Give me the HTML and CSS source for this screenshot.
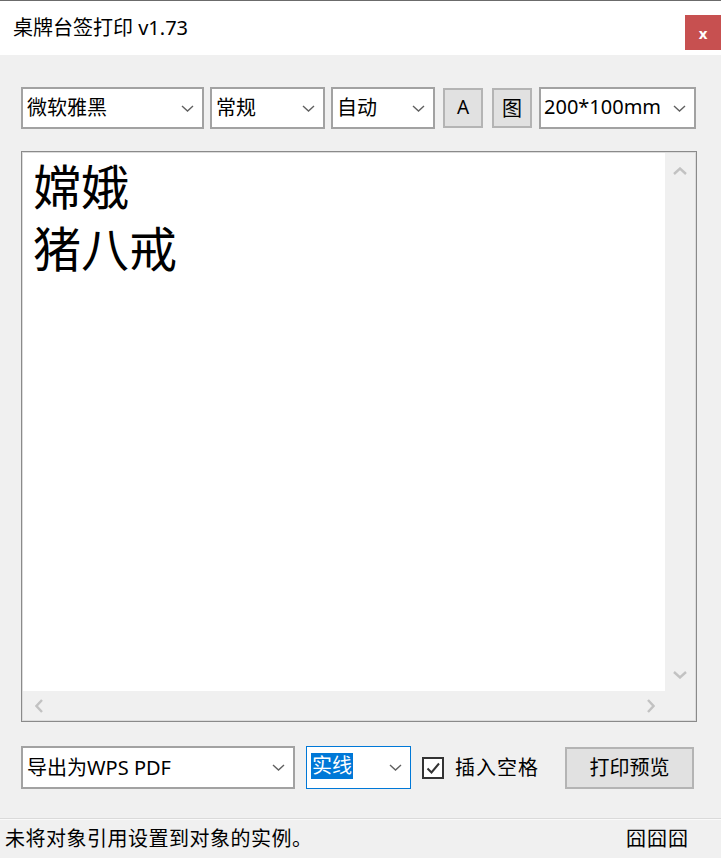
FILE: index.html
```html
<!DOCTYPE html>
<html lang="zh-CN">
<head>
  <meta charset="UTF-8">
  <title>桌牌台签打印 v1.73</title>
  <link rel="stylesheet" href="styles.css">
</head>
<body>
  <div class="window">
    <div class="titlebar">
      <span class="title">桌牌台签打印 v1.73</span>
      <div class="close">x</div>
    </div>

    <div class="toolbar">
      <div class="select w-font"><span>微软雅黑</span><svg viewBox="0 0 13 7"><path d="M1 1L6.5 6L12 1"/></svg></div>
      <div class="select w-style"><span>常规</span><svg viewBox="0 0 13 7"><path d="M1 1L6.5 6L12 1"/></svg></div>
      <div class="select w-size"><span>自动</span><svg viewBox="0 0 13 7"><path d="M1 1L6.5 6L12 1"/></svg></div>
      <div class="btn square b-a">A</div>
      <div class="btn square b-img">图</div>
      <div class="select w-paper"><span>200*100mm</span><svg viewBox="0 0 13 7"><path d="M1 1L6.5 6L12 1"/></svg></div>
    </div>

    <div class="editor">
      <div class="editor-text">嫦娥<br>猪八戒</div>
      <div class="vscroll">
        <svg viewBox="0 0 14 8"><path d="M1 7L7 1.5L13 7"/></svg>
        <svg viewBox="0 0 14 8"><path d="M1 1L7 6.5L13 1"/></svg>
      </div>
      <div class="hscroll">
        <svg viewBox="0 0 8 14"><path d="M7 1L1.5 7L7 13"/></svg>
        <svg viewBox="0 0 8 14"><path d="M1 1L6.5 7L1 13"/></svg>
      </div>
      <div class="corner"></div>
    </div>

    <div class="bottombar">
      <div class="select w-export"><span>导出为WPS PDF</span><svg viewBox="0 0 13 7"><path d="M1 1L6.5 6L12 1"/></svg></div>
      <div class="select w-line focused"><span class="sel">实线</span><svg viewBox="0 0 13 7"><path d="M1 1L6.5 6L12 1"/></svg></div>
      <label class="check">
        <span class="box"><svg viewBox="0 0 16 16"><path d="M2.5 8.5L6.5 12.5L14 3.5"/></svg></span>
        <span class="check-text">插入空格</span>
      </label>
      <div class="btn preview">打印预览</div>
    </div>

    <div class="statusbar">
      <span class="status-text">未将对象引用设置到对象的实例。</span>
      <span class="status-right">囧囧囧</span>
    </div>
  </div>
</body>
</html>
```

FILE: styles.css
```css
body {
  margin: 0;
  background-color: #f0f0f0;
  font-family: "Noto Sans", "Noto Sans CJK SC", sans-serif;
  color: #000;
}

.window {
  width: 721px;
  height: 858px;
  display: flex;
  flex-direction: column;
  overflow: hidden;
}

/* Title bar */
.titlebar {
  height: 54px;
  background-color: #fff;
  border-top: 1px solid #6b6b6b;
  display: flex;
  justify-content: space-between;
  align-items: flex-start;
}

.title {
  font-size: 20px;
  line-height: 20px;
  margin: 17px 0 0 13px;
}

.close {
  width: 36px;
  height: 35px;
  margin-top: 14px;
  background-color: #c75050;
  color: #fff;
  font-weight: bold;
  font-size: 15px;
  display: flex;
  align-items: center;
  justify-content: center;
}

/* Toolbar */
.toolbar {
  display: flex;
  align-items: center;
  margin-top: 32px;
  padding-left: 21px;
  height: 42px;
}

.select {
  height: 42px;
  box-sizing: border-box;
  border: 2px solid #a2a2a2;
  background-color: #fff;
  display: flex;
  align-items: center;
  justify-content: space-between;
  padding: 0 8px 3px 4px;
  font-size: 20px;
  white-space: nowrap;
  overflow: hidden;
}

.select svg {
  width: 13px;
  height: 7px;
  flex-shrink: 0;
  margin-top: 3px;
  fill: none;
  stroke: #606060;
  stroke-width: 1.4;
}

.w-font { width: 183px; }
.w-style { width: 115px; margin-left: 6px; }
.w-size { width: 104px; margin-left: 6px; }
.w-paper { width: 157px; margin-left: 7px; padding-left: 3px; }
.w-paper span { overflow: hidden; }

.btn {
  box-sizing: border-box;
  background-color: #e1e1e1;
  border: 2px solid #b4b4b4;
  display: flex;
  align-items: center;
  justify-content: center;
  font-size: 20px;
  padding-bottom: 2px;
}

.square {
  width: 40px;
  height: 40px;
}

.b-a { margin-left: 8px; font-size: 19px; }
.b-img { margin-left: 9px; }

/* Editor */
.editor {
  margin: 22px 0 0 21px;
  width: 676px;
  height: 571px;
  box-sizing: border-box;
  border: 1px solid #8a8a8a;
  box-shadow: inset 0 0 0 1px #dcdcdc;
  padding: 1px;
  display: grid;
  grid-template-columns: 1fr 30px;
  grid-template-rows: 1fr 29px;
  background-color: #f0f0f0;
}

.editor-text {
  background-color: #fff;
  font-size: 48px;
  line-height: 62px;
  padding: 3px 10px;
}

.vscroll {
  display: flex;
  flex-direction: column;
  justify-content: space-between;
  align-items: center;
  padding: 14px 0 12px;
}

.vscroll svg {
  width: 14px;
  height: 8px;
  fill: none;
  stroke: #c2c2c2;
  stroke-width: 2.4;
}

.hscroll {
  display: flex;
  justify-content: space-between;
  align-items: center;
  padding: 0 10px 0 12px;
}

.hscroll svg {
  width: 8px;
  height: 14px;
  fill: none;
  stroke: #c2c2c2;
  stroke-width: 2.4;
}

/* Bottom bar */
.bottombar {
  display: flex;
  align-items: center;
  margin-top: 24px;
  padding: 0 27px 0 21px;
  height: 43px;
}

.w-export { width: 274px; height: 43px; }
.w-line { width: 105px; height: 43px; margin-left: 11px; padding-left: 3px; }

.focused {
  border-color: #0078d7;
  border-width: 1px;
  padding-left: 4px;
}

.sel {
  background-color: #0078d7;
  color: #fff;
  line-height: 26px;
  padding: 0 1px;
}

.check {
  display: flex;
  align-items: center;
  margin-left: 11px;
  font-size: 20px;
}

.check-text {
  letter-spacing: 1px;
  padding-bottom: 2px;
}

.box {
  width: 22px;
  height: 22px;
  box-sizing: border-box;
  border: 2px solid #333;
  background-color: #fff;
  display: flex;
  align-items: center;
  justify-content: center;
  margin-right: 11px;
}

.box svg {
  width: 16px;
  height: 16px;
  fill: none;
  stroke: #333;
  stroke-width: 2;
}

.preview {
  width: 129px;
  height: 42px;
  margin-left: auto;
}

/* Status bar */
.statusbar {
  margin-top: 29px;
  border-top: 1px solid #dadada;
  box-shadow: inset 0 1px 0 #fafafa;
  flex: 1;
  display: flex;
  justify-content: space-between;
  align-items: center;
  font-size: 20px;
  padding: 0 32px 2px 5px;
}

.status-text {
  letter-spacing: 0.5px;
}

.status-right {
  letter-spacing: 1px;
}
```
